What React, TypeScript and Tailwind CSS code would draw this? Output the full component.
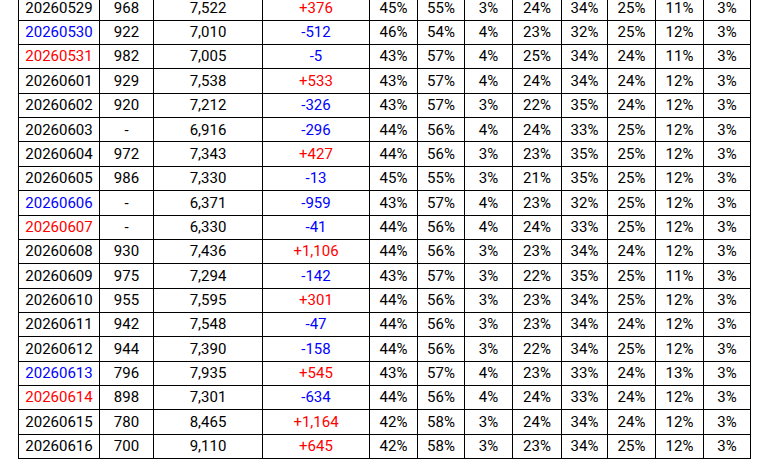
const RED = "text-[#ff0000]";
const BLUE = "text-[#0000ff]";

type Row = {
  date: string;
  dateColor?: "red" | "blue";
  a: string;
  b: string;
  diff: string;
  pcts: string[];
};

const rows: Row[] = [
  { date: "20260529", a: "968", b: "7,522", diff: "+376", pcts: ["45%", "55%", "3%", "24%", "34%", "25%", "11%", "3%"] },
  { date: "20260530", dateColor: "blue", a: "922", b: "7,010", diff: "-512", pcts: ["46%", "54%", "4%", "23%", "32%", "25%", "12%", "3%"] },
  { date: "20260531", dateColor: "red", a: "982", b: "7,005", diff: "-5", pcts: ["43%", "57%", "4%", "25%", "34%", "24%", "11%", "3%"] },
  { date: "20260601", a: "929", b: "7,538", diff: "+533", pcts: ["43%", "57%", "4%", "24%", "34%", "24%", "12%", "3%"] },
  { date: "20260602", a: "920", b: "7,212", diff: "-326", pcts: ["43%", "57%", "3%", "22%", "35%", "24%", "12%", "3%"] },
  { date: "20260603", a: "-", b: "6,916", diff: "-296", pcts: ["44%", "56%", "4%", "24%", "33%", "25%", "12%", "3%"] },
  { date: "20260604", a: "972", b: "7,343", diff: "+427", pcts: ["44%", "56%", "3%", "23%", "35%", "25%", "12%", "3%"] },
  { date: "20260605", a: "986", b: "7,330", diff: "-13", pcts: ["45%", "55%", "3%", "21%", "35%", "25%", "12%", "3%"] },
  { date: "20260606", dateColor: "blue", a: "-", b: "6,371", diff: "-959", pcts: ["43%", "57%", "4%", "23%", "32%", "25%", "12%", "3%"] },
  { date: "20260607", dateColor: "red", a: "-", b: "6,330", diff: "-41", pcts: ["44%", "56%", "4%", "24%", "33%", "25%", "12%", "3%"] },
  { date: "20260608", a: "930", b: "7,436", diff: "+1,106", pcts: ["44%", "56%", "3%", "23%", "34%", "24%", "12%", "3%"] },
  { date: "20260609", a: "975", b: "7,294", diff: "-142", pcts: ["43%", "57%", "3%", "22%", "35%", "25%", "11%", "3%"] },
  { date: "20260610", a: "955", b: "7,595", diff: "+301", pcts: ["44%", "56%", "3%", "23%", "34%", "25%", "12%", "3%"] },
  { date: "20260611", a: "942", b: "7,548", diff: "-47", pcts: ["44%", "56%", "3%", "23%", "34%", "24%", "12%", "3%"] },
  { date: "20260612", a: "944", b: "7,390", diff: "-158", pcts: ["44%", "56%", "3%", "22%", "34%", "25%", "12%", "3%"] },
  { date: "20260613", dateColor: "blue", a: "796", b: "7,935", diff: "+545", pcts: ["43%", "57%", "4%", "23%", "33%", "24%", "13%", "3%"] },
  { date: "20260614", dateColor: "red", a: "898", b: "7,301", diff: "-634", pcts: ["44%", "56%", "4%", "24%", "33%", "24%", "12%", "3%"] },
  { date: "20260615", a: "780", b: "8,465", diff: "+1,164", pcts: ["42%", "58%", "3%", "24%", "34%", "24%", "12%", "3%"] },
  { date: "20260616", a: "700", b: "9,110", diff: "+645", pcts: ["42%", "58%", "3%", "23%", "34%", "25%", "12%", "3%"] },
];

function Cell({ children, className = "" }: { children: React.ReactNode; className?: string }) {
  return (
    <div className={`h-[24.37px] border-r border-b border-black flex items-center justify-center ${className}`}>
      {children}
    </div>
  );
}

export default function App() {
  return (
    <div className="w-[769px] h-[467px] overflow-hidden bg-white font-['Roboto',sans-serif] text-[15px] text-black">
      <div className="ml-[18px] mt-[-3.7px] w-[733px] border-l border-black grid grid-cols-[81px_54px_109px_107px_48px_47px_48px_49px_46px_48px_48px_47px]">
        {rows.map((r) => (
          <div key={r.date} className="contents">
            <Cell className={r.dateColor === "red" ? RED : r.dateColor === "blue" ? BLUE : ""}>{r.date}</Cell>
            <Cell>{r.a}</Cell>
            <Cell>{r.b}</Cell>
            <Cell className={r.diff.startsWith("+") ? RED : BLUE}>{r.diff}</Cell>
            {r.pcts.map((p, i) => (
              <Cell key={i}>{p}</Cell>
            ))}
          </div>
        ))}
      </div>
    </div>
  );
}
